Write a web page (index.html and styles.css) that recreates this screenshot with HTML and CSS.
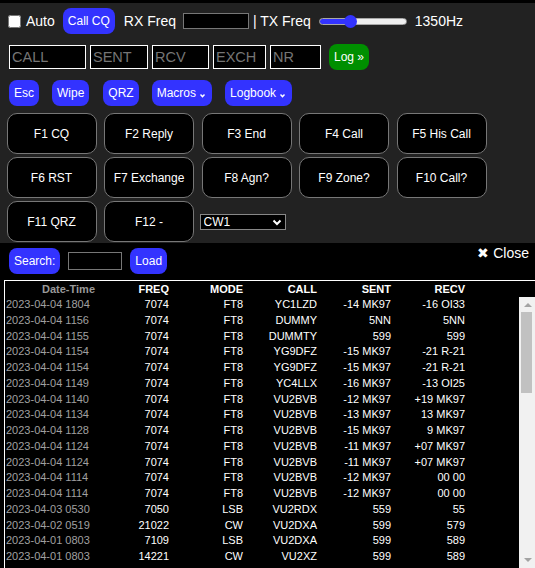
FILE: index.html
```html
<!DOCTYPE html>
<html>
<head>
<meta charset="utf-8">
<title>Logger</title>
<link rel="stylesheet" href="styles.css">
</head>
<body>
<div class="panel">
  <div class="row row1">
    <input type="checkbox" class="chk">
    <span class="lbl auto">Auto</span>
    <button class="btn callcq">Call CQ</button>
    <span class="lbl rx">RX Freq</span>
    <input type="text" class="rxin">
    <span class="lbl tx">| TX Freq</span>
    <input type="range" class="slider" min="0" max="4000" value="1350">
    <span class="lbl hz">1350Hz</span>
  </div>
  <div class="row row2">
    <input class="fld w-call" placeholder="CALL">
    <input class="fld w-sent" placeholder="SENT">
    <input class="fld w-rcv" placeholder="RCV">
    <input class="fld w-exch" placeholder="EXCH">
    <input class="fld w-nr" placeholder="NR">
    <button class="btn log-btn">Log »</button>
  </div>
  <div class="row row3">
    <button class="btn">Esc</button>
    <button class="btn">Wipe</button>
    <button class="btn qrz">QRZ</button>
    <button class="btn">Macros<svg class="chev" viewBox="0 0 9 6" width="9" height="6"><path d="M2.5 1.5 L4.5 3.8 L6.5 1.5" fill="none" stroke="#fff" stroke-width="1.4"/></svg></button>
    <button class="btn">Logbook<svg class="chev" viewBox="0 0 9 6" width="9" height="6"><path d="M2.5 1.5 L4.5 3.8 L6.5 1.5" fill="none" stroke="#fff" stroke-width="1.4"/></svg></button>
  </div>
  <div class="fkeys">
    <button class="fk">F1 CQ</button>
    <button class="fk">F2 Reply</button>
    <button class="fk">F3 End</button>
    <button class="fk">F4 Call</button>
    <button class="fk">F5 His Call</button>
    <button class="fk">F6 RST</button>
    <button class="fk">F7 Exchange</button>
    <button class="fk">F8 Agn?</button>
    <button class="fk">F9 Zone?</button>
    <button class="fk">F10 Call?</button>
    <button class="fk">F11 QRZ</button>
    <button class="fk">F12 -</button>
    <span class="selwrap">
      <select class="sel"><option>CW1</option><option>CW2</option></select>
      <svg class="selarrow" viewBox="0 0 10 7" width="10" height="7"><path d="M1.5 1.5 L5 5 L8.5 1.5" fill="none" stroke="#fff" stroke-width="2"/></svg>
    </span>
  </div>
</div>

<div class="searchrow">
  <button class="btn">Search:</button>
  <input type="text" class="search-in">
  <button class="btn load">Load</button>
  <span class="close">✖ Close</span>
</div>

<div class="log">
  <table class="lt">
    <colgroup><col class="c1"><col class="cn"><col class="cn"><col class="cn"><col class="cn"><col class="cn"></colgroup>
    <thead>
      <tr><th class="dt">Date-Time</th><th>FREQ</th><th>MODE</th><th>CALL</th><th>SENT</th><th>RECV</th></tr>
    </thead>
  </table>
  <div class="scrollwrap">
    <div class="rows">
      <table class="lt">
        <colgroup><col class="c1"><col class="cn"><col class="cn"><col class="cn"><col class="cn"><col class="cn"></colgroup>
        <tbody>
          <tr><td class="dt">2023-04-04 1804</td><td>7074</td><td>FT8</td><td>YC1LZD</td><td>-14 MK97</td><td>-16 OI33</td></tr>
          <tr><td class="dt">2023-04-04 1156</td><td>7074</td><td>FT8</td><td>DUMMY</td><td>5NN</td><td>5NN</td></tr>
          <tr><td class="dt">2023-04-04 1155</td><td>7074</td><td>FT8</td><td>DUMMTY</td><td>599</td><td>599</td></tr>
          <tr><td class="dt">2023-04-04 1154</td><td>7074</td><td>FT8</td><td>YG9DFZ</td><td>-15 MK97</td><td>-21 R-21</td></tr>
          <tr><td class="dt">2023-04-04 1154</td><td>7074</td><td>FT8</td><td>YG9DFZ</td><td>-15 MK97</td><td>-21 R-21</td></tr>
          <tr><td class="dt">2023-04-04 1149</td><td>7074</td><td>FT8</td><td>YC4LLX</td><td>-16 MK97</td><td>-13 OI25</td></tr>
          <tr><td class="dt">2023-04-04 1140</td><td>7074</td><td>FT8</td><td>VU2BVB</td><td>-12 MK97</td><td>+19 MK97</td></tr>
          <tr><td class="dt">2023-04-04 1134</td><td>7074</td><td>FT8</td><td>VU2BVB</td><td>-13 MK97</td><td>13 MK97</td></tr>
          <tr><td class="dt">2023-04-04 1128</td><td>7074</td><td>FT8</td><td>VU2BVB</td><td>-15 MK97</td><td>9 MK97</td></tr>
          <tr><td class="dt">2023-04-04 1124</td><td>7074</td><td>FT8</td><td>VU2BVB</td><td>-11 MK97</td><td>+07 MK97</td></tr>
          <tr><td class="dt">2023-04-04 1124</td><td>7074</td><td>FT8</td><td>VU2BVB</td><td>-11 MK97</td><td>+07 MK97</td></tr>
          <tr><td class="dt">2023-04-04 1114</td><td>7074</td><td>FT8</td><td>VU2BVB</td><td>-12 MK97</td><td>00 00</td></tr>
          <tr><td class="dt">2023-04-04 1114</td><td>7074</td><td>FT8</td><td>VU2BVB</td><td>-12 MK97</td><td>00 00</td></tr>
          <tr><td class="dt">2023-04-03 0530</td><td>7050</td><td>LSB</td><td>VU2RDX</td><td>559</td><td>55</td></tr>
          <tr><td class="dt">2023-04-02 0519</td><td>21022</td><td>CW</td><td>VU2DXA</td><td>599</td><td>579</td></tr>
          <tr><td class="dt">2023-04-01 0803</td><td>7109</td><td>LSB</td><td>VU2DXA</td><td>599</td><td>589</td></tr>
          <tr><td class="dt">2023-04-01 0803</td><td>14221</td><td>CW</td><td>VU2XZ</td><td>599</td><td>589</td></tr>
        </tbody>
      </table>
    </div>
    <div class="sbar">
      <div class="sb-btn"><svg viewBox="0 0 8 5" width="8" height="5"><path d="M0 5 L4 1 L8 5 Z" fill="#a3a3a3"/></svg></div>
      <div class="sb-track"><div class="sb-thumb"></div></div>
      <div class="sb-btn"><svg viewBox="0 0 8 5" width="8" height="5"><path d="M0 0 L4 4 L8 0 Z" fill="#a3a3a3"/></svg></div>
    </div>
  </div>
</div>
</body>
</html>
```

FILE: styles.css
```css
html, body {
  margin: 0;
  padding: 0;
  background: #000;
  overflow: hidden;
}
body {
  width: 535px;
  height: 568px;
  font-family: "Liberation Sans", Arial, sans-serif;
  color: #fff;
}

.panel {
  margin-top: 3px;
  background: #222;
  padding: 5px 0 1px 0;
}

.row {
  display: flex;
  align-items: center;
  height: 26px;
}

.row1 { padding-left: 8px; }
.chk { margin: 0; width: 13px; height: 13px; }
.lbl { font-size: 14px; color: #fff; white-space: pre; }
.auto { margin-left: 5px; }
.callcq { margin-left: 8px; }
.rx { margin-left: 9px; }
.rxin {
  margin-left: 7px;
  width: 66px;
  height: 16px;
  box-sizing: border-box;
  background: #000;
  border: 1px solid #777;
  padding: 0;
}
.tx { margin-left: 4px; }
.hz { margin-left: 8px; }

.slider {
  -webkit-appearance: none;
  appearance: none;
  margin: 0 0 0 8px;
  width: 88px;
  height: 14px;
  background: transparent;
}
.slider::-webkit-slider-runnable-track {
  height: 7px;
  box-sizing: border-box;
  border-radius: 4px;
  border: 1px solid #a8a8a8;
  background: linear-gradient(to right, #3333ff 0, #3333ff 36%, #efefef 36%, #efefef 100%);
}
.slider::-webkit-slider-thumb {
  -webkit-appearance: none;
  appearance: none;
  width: 13px;
  height: 13px;
  border-radius: 50%;
  background: #3333ff;
  margin-top: -4px;
  border: 0;
}

.btn {
  height: 26px;
  padding: 0 5px;
  border: 0;
  border-radius: 8px;
  background: #3333ff;
  color: #fff;
  font: 12px "Liberation Sans", Arial, sans-serif;
  display: inline-flex;
  align-items: center;
  white-space: nowrap;
}
.chev { margin-left: 2px; margin-top: 5px; }

.row2 { margin-top: 10px; padding-left: 9px; gap: 4px; }
.fld {
  box-sizing: border-box;
  height: 24px;
  margin: 0;
  background: #000;
  border: 1px solid #fff;
  color: #fff;
  font: 14.5px "Liberation Sans", Arial, sans-serif;
  padding: 0 2px;
}
.fld::placeholder { color: #757575; }
.w-call { width: 77px; }
.w-sent { width: 58px; }
.w-rcv { width: 57px; }
.w-exch { width: 53px; }
.w-nr { width: 51px; }
.log-btn { margin-left: 4px; background: #008f00; }

.row3 { margin-top: 10px; padding-left: 9px; gap: 13px; }
.qrz { margin-left: 1px; }

.fkeys {
  margin-top: 7px;
  padding-left: 6.5px;
  display: flex;
  flex-wrap: wrap;
  align-items: center;
  gap: 3px 7.5px;
}
.fk {
  width: 90px;
  height: 41px;
  box-sizing: border-box;
  background: #000;
  border: 1px solid #777;
  border-radius: 10px;
  color: #fff;
  font: 12px "Liberation Sans", Arial, sans-serif;
  padding: 0;
}
.selwrap {
  position: relative;
  display: inline-block;
  margin-left: -2px;
  height: 16px;
}
.sel {
  -webkit-appearance: none;
  appearance: none;
  display: block;
  width: 86px;
  height: 16px;
  box-sizing: border-box;
  background: #000;
  color: #fff;
  border: 1px solid #888;
  border-radius: 0;
  font: 12px "Liberation Sans", Arial, sans-serif;
  padding: 0 0 0 3px;
  line-height: 14px;
}
.selarrow {
  position: absolute;
  right: 4px;
  top: 5px;
}

.searchrow {
  display: flex;
  align-items: center;
  padding-left: 9px;
  margin-top: 5px;
  height: 26px;
}
.search-in {
  margin-left: 8px;
  width: 54px;
  height: 18px;
  box-sizing: border-box;
  background: #000;
  border: 1px solid #777;
  padding: 0;
}
.load { margin-left: 8px; }
.close {
  margin-left: auto;
  margin-right: 6px;
  align-self: flex-start;
  margin-top: -3px;
  font-size: 14px;
  line-height: 16px;
  color: #fff;
}

.log {
  margin: 6px 0 0 4px;
  border-top: 1px solid #fff;
  border-left: 1px solid #fff;
}
.lt {
  border-collapse: collapse;
  table-layout: fixed;
  width: 461px;
  font-size: 11px;
}
.c1 { width: 91px; }
.cn { width: 74px; }
.lt td, .lt th {
  padding: 1px;
  line-height: 13.75px;
  text-align: right;
  white-space: nowrap;
  overflow: hidden;
  color: #fff;
}
.lt th { font-weight: bold; line-height: 14px; }
.lt th.dt { color: #999; }
.lt td.dt { text-align: left; color: #a0a0a0; }

.scrollwrap {
  display: flex;
  height: 271px;
}
.rows {
  flex: 1;
  overflow: hidden;
}
.sbar {
  width: 16px;
  display: flex;
  flex-direction: column;
  background: #f1f1f1;
}
.sb-btn {
  height: 15px;
  display: flex;
  align-items: center;
  justify-content: center;
  padding-left: 1px;
}
.sb-track {
  flex: 1;
}
.sb-thumb {
  height: 81px;
  margin: 0 3px 0 2px;
  background: #c1c1c1;
}
```
